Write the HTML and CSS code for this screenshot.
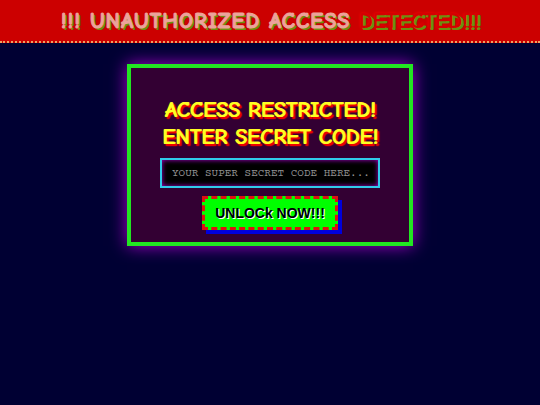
FILE: index.html
```html
<!DOCTYPE html>
<html lang="en">
<head>
<meta charset="utf-8">
<title>Unauthorized access</title>
<link rel="stylesheet" href="styles.css">
</head>
<body>
<header class="banner">
  <h1 class="banner-title">!!! UNAUTHORIZED ACCESS <span class="blink">DETECTED!!!</span></h1>
</header>
<main class="stage">
  <form class="card">
    <h2 class="card-title"><label for="code">ACCESS RESTRICTED!<br>ENTER SECRET CODE!</label></h2>
    <input class="code" id="code" type="text" placeholder="YOUR SUPER SECRET CODE HERE...">
    <button class="unlock" type="button">UNLOCk NOW!!!</button>
  </form>
</main>
</body>
</html>
```
FILE: styles.css
```css
* {
  box-sizing: border-box;
}

body {
  margin: 0;
  min-height: 100vh;
  background: #000033;
  font-family: "Comic Sans MS", "Comic Neue", cursive;
}

.banner {
  padding: 8px 8px 6px;
  background: #cc0000;
  border-bottom: 2px dotted #f0a060;
  text-align: center;
}

.banner-title {
  margin: 0;
  font-size: 22px;
  line-height: 27px;
  letter-spacing: 1px;
  color: #eca39b;
  -webkit-text-stroke: 1px #eca39b;
  text-shadow: 2px 2px 0 #6c9010;
}

.blink {
  letter-spacing: 0;
  color: #d40000;
  -webkit-text-stroke: 0;
  text-shadow: 2px 2px 0 #6c9010, 3px 2px 0 #6c9010, 0 0 3px #ff0000;
}

.stage {
  display: flex;
  justify-content: center;
  padding: 21px 8px;
}

.card {
  display: flex;
  flex-direction: column;
  align-items: center;
  padding: 29px 29px 12px;
  background: #330033;
  border: 4px solid #22e622;
  box-shadow: 0 0 16px #aa00cc;
}

.card-title {
  margin: 0 0 7px;
  font-size: 22px;
  line-height: 27px;
  text-align: center;
  white-space: nowrap;
  color: #ffff22;
  text-shadow: 1px 0 0 #ffee22, 2px 2px 1px #ee0000, 3px 2px 1px #ee0000;
}

.code {
  width: 220px;
  height: 30px;
  margin: 0 0 8px;
  padding: 0 10px;
  background: #000000;
  border: 2px solid #30cbea;
  border-radius: 0;
  box-shadow: inset 0 0 5px #aa00cc;
  color: #00ff00;
  font: 400 11px "Courier Prime", "Liberation Mono", monospace;
}

.code::placeholder {
  color: #909090;
}

.unlock {
  height: 34px;
  padding: 0 10px;
  background: #00ff00;
  border: 3px dashed #dd1111;
  box-shadow: 4px 4px 0 #0000dd;
  color: #000000;
  font: 700 14px "Liberation Sans", sans-serif;
  text-shadow: 1px 1px 0 #ffffff;
}
```
